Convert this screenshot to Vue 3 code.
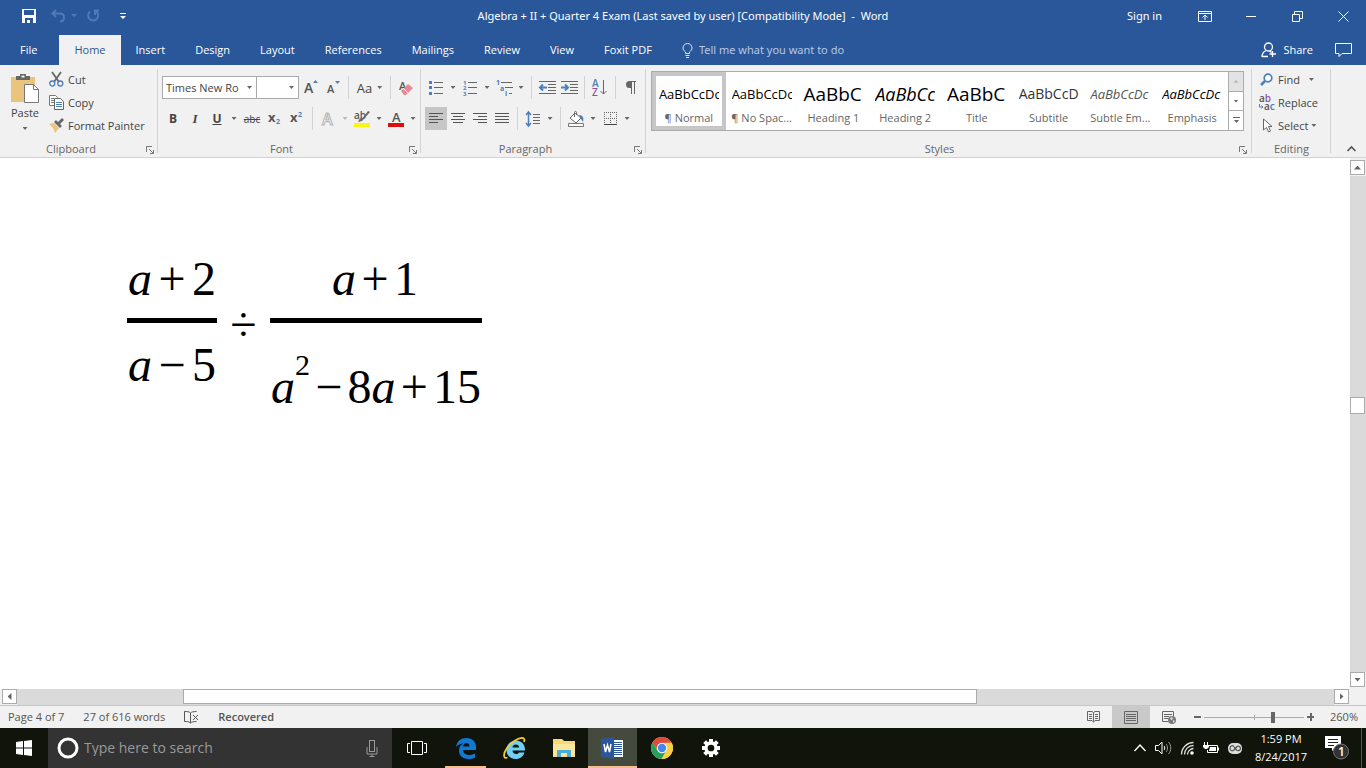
<script setup>
import { ref } from 'vue'

const tabs = ['File', 'Home', 'Insert', 'Design', 'Layout', 'References', 'Mailings', 'Review', 'View', 'Foxit PDF']
const activeTab = ref('Home')
const styles = [
  { name: '¶ Normal', sample: 'AaBbCcDc', kind: 'body' },
  { name: '¶ No Spac...', sample: 'AaBbCcDc', kind: 'body' },
  { name: 'Heading 1', sample: 'AaBbC', kind: 'big' },
  { name: 'Heading 2', sample: 'AaBbCc', kind: 'head2' },
  { name: 'Title', sample: 'AaBbC', kind: 'big' },
  { name: 'Subtitle', sample: 'AaBbCcD', kind: 'sub' },
  { name: 'Subtle Em...', sample: 'AaBbCcDc', kind: 'subtle' },
  { name: 'Emphasis', sample: 'AaBbCcDc', kind: 'emph' }
]
const fontName = ref('Times New Ro')
const fontSize = ref('')
const zoom = ref(260)
const search = ref('')
const tellMe = ref('')
</script>

<template>
  <div class="app">
    <header class="titlebar">
      <div class="quick">
        <button class="qbtn save" aria-label="Save"><svg width="14" height="14" viewBox="0 0 14 14"><path fill="#fff" fill-rule="evenodd" d="M0 0h14v14H0zM2 1v5h10V1zM3 9v5h2v-3h3v3h3V9z"/></svg></button>
        <button class="qbtn undo" aria-label="Undo"><svg width="28" height="14" viewBox="0 0 28 14"><path d="M5 1 1.500 4.500 5 8M2 4.500h7c3 0 4 2 4 4 0 3-2 4-4 4" fill="none" stroke="#5079b8" stroke-width="2"/><path d="M20 5h6l-3 3z" fill="#5079b8"/></svg></button>
        <button class="qbtn redo" aria-label="Repeat"><svg width="14" height="14" viewBox="0 0 14 14"><path d="M4 2.500a5 5 0 1 0 5.500-.5M9 6V1.500h4" fill="none" stroke="#5079b8" stroke-width="2"/></svg></button>
        <button class="qbtn more" aria-label="Customize toolbar"><svg width="6" height="7" viewBox="0 0 6 7"><path d="M0 0h6v1H0zM0 3h6L3 6z" fill="#fff"/></svg></button>
      </div>
      <h1 class="title">Algebra + II + Quarter 4 Exam (Last saved by user) [Compatibility Mode]&nbsp; -&nbsp; Word</h1>
      <div class="window">
        <button class="signin">Sign in</button>
        <button class="wbtn" aria-label="Ribbon options"><svg width="14" height="11" viewBox="0 0 14 11"><path d="M.5.5h13v10H.5zM.5 2.500h13M7 9V4M4.500 6.500 7 4l2.500 2.500" fill="none" stroke="#fff"/></svg></button>
        <button class="wbtn" aria-label="Minimize"><svg width="10" height="10" viewBox="0 0 10 10"><path d="M0 5.500h10" stroke="#fff"/></svg></button>
        <button class="wbtn" aria-label="Restore"><svg width="11" height="11" viewBox="0 0 11 11"><path d="M.5 3.500h7v7h-7zM2.500 3V.5h8v7H8" fill="none" stroke="#fff"/></svg></button>
        <button class="wbtn" aria-label="Close"><svg width="11" height="11" viewBox="0 0 11 11"><path d="m.5.5 10 10m0-10-10 10" stroke="#fff"/></svg></button>
      </div>
    </header>

    <nav class="tabs">
      <button v-for="t in tabs" :key="t" class="tab" :class="{ active: t === activeTab }" @click="activeTab = t">{{ t }}</button>
      <label class="tell">
        <svg width="11" height="15" viewBox="0 0 11 15"><path d="M3.500 10.500V9C2 8 1 6.500 1 5a4.500 4.500 0 0 1 9 0c0 1.500-1 3-2.500 4v1.500zM3.500 12.500h4M4 14.500h3" fill="none" stroke="#dbe5f3"/></svg>
        <input v-model="tellMe" type="text" placeholder="Tell me what you want to do" aria-label="Tell me what you want to do" />
      </label>
      <button class="share"><svg width="16" height="16" viewBox="0 0 16 16"><circle cx="7.500" cy="5" r="4" fill="none" stroke="#fff" stroke-width="1.300"/><path d="M5.500 8.500C2.500 9.500 1 12 1 15M1 14.500h6M8.500 9l2 1.500M11.500 9v6M8.500 12H15" fill="none" stroke="#fff" stroke-width="1.300"/></svg>Share</button>
      <button class="comment" aria-label="Comments"><svg width="17" height="15" viewBox="0 0 17 15"><path d="M.5.500h16v10H7l-3 3v-3H.500z" fill="none" stroke="#fff"/></svg></button>
    </nav>

    <section class="ribbon">
      <div class="group clipboard">
        <div class="clipbody">
          <button class="paste">
            <svg width="29" height="31" viewBox="0 0 29 31"><path d="M0 4h24v25H0z" fill="#eac47c"/><path d="M5 3h4V1h6v2h4v4H5z" fill="#666"/><path d="M10.500 2.500h3v2h-3z" fill="#f1f1f1"/><path d="M13.500 11.500h9l5 5v13h-14z" fill="#fff" stroke="#777"/><path d="M22.500 11.500v5h5" fill="none" stroke="#777"/></svg>
            <span>Paste</span><i class="arrow"></i>
          </button>
          <div class="stack">
            <button class="cmd"><svg width="15" height="15" viewBox="0 0 15 15"><path d="m3 0 7 10M12 0 5 10" stroke="#666" stroke-width="1.800"/><g fill="none" stroke="#4d80b8" stroke-width="1.300"><circle cx="3.300" cy="11.500" r="2.500"/><circle cx="11.300" cy="11.500" r="2.500"/></g></svg>Cut</button>
            <button class="cmd"><svg width="15" height="15" viewBox="0 0 15 15"><path d="M.5.500h6l2 2v8h-8zM2 3.500h3m-3 2h3m-3 2h3" fill="#fff" stroke="#777"/><path d="M5.500 3.500h6l3 3v8h-9z" fill="#fff" stroke="#666"/><path d="M7 7.500h6m-6 2h6m-6 2h6" stroke="#4d80b8"/></svg>Copy</button>
            <button class="cmd"><svg width="15" height="15" viewBox="0 0 15 15"><path d="m0 6 5-1 5 5-4 5c-1-4-3-7-6-9z" fill="#eac47c"/><path d="m5 4 2-2 6 6-2 2zM9 4l4-4 2 2-4 4z" fill="#666"/></svg>Format Painter</button>
          </div>
        </div>
        <div class="label">Clipboard<button class="launch" aria-label="Clipboard settings"><svg width="8" height="8" viewBox="0 0 8 8"><path d="M.5 6V.500H6M3 3l4 4M7.500 4v3.500H4" fill="none" stroke="#777"/></svg></button></div>
      </div>

      <div class="group font">
        <div class="row">
          <label class="combo name"><input v-model="fontName" aria-label="Font" /><i class="arrow"></i></label>
          <label class="combo size"><input v-model="fontSize" aria-label="Font size" /><i class="arrow"></i></label>
          <button class="ic" aria-label="Grow font"><svg width="14" height="15" viewBox="0 0 14 15"><text x="0" y="13" font-size="14" font-weight="600" fill="#555">A</text><path d="M9 3h5l-2.500-3z" fill="#4d80b8"/></svg></button>
          <button class="ic" aria-label="Shrink font"><svg width="14" height="15" viewBox="0 0 14 15"><text x="1" y="13" font-size="11" font-weight="600" fill="#555">A</text><path d="M9 1h5l-2.500 3z" fill="#4d80b8"/></svg></button>
          <i class="sep"></i>
          <button class="ic aa">Aa<i class="arrow"></i></button>
          <i class="sep"></i>
          <button class="ic" aria-label="Clear formatting"><svg width="16" height="16" viewBox="0 0 16 16"><text x="1" y="10" font-size="11" font-weight="600" fill="#555">A</text><path d="m3 11 7-7 5 4-7 7H6z" fill="#e58a95"/><path d="m5 8 5 5" stroke="#fff"/></svg></button>
        </div>
        <div class="row">
          <button class="ic"><b>B</b></button>
          <button class="ic ital">I</button>
          <button class="ic"><b><u>U</u></b></button><button class="drop" aria-label="Underline style"><i class="arrow"></i></button>
          <button class="ic strike">abc</button>
          <button class="ic" aria-label="Subscript"><svg width="14" height="15" viewBox="0 0 14 15"><text x="0" y="11" font-size="13" font-weight="700" fill="#555">x</text><text x="8" y="13" font-size="7" font-weight="700" fill="#4d80b8">2</text></svg></button>
          <button class="ic" aria-label="Superscript"><svg width="14" height="15" viewBox="0 0 14 15"><text x="0" y="11" font-size="13" font-weight="700" fill="#555">x</text><text x="8" y="6" font-size="7" font-weight="700" fill="#4d80b8">2</text></svg></button>
          <i class="sep"></i>
          <button class="ic" aria-label="Text effects"><svg width="16" height="16" viewBox="0 0 16 16"><text x="2" y="14" font-size="16" font-weight="600" fill="#fff" stroke="#b4b4b4">A</text></svg></button><button class="drop pale" aria-label="Effects list"><i class="arrow"></i></button>
          <button class="ic" aria-label="Highlight"><svg width="16" height="16" viewBox="0 0 16 16"><text x="0" y="8" font-size="10" font-weight="600" fill="#555">ab</text><path d="m16 1-8 9-4 1 2-4 2 1 6-8z" fill="#666"/><path d="M0 12h16v4H0z" fill="#fbf312"/></svg></button><button class="drop" aria-label="Highlight colors"><i class="arrow"></i></button>
          <button class="ic" aria-label="Font color"><svg width="16" height="16" viewBox="0 0 16 16"><text x="4" y="11" font-size="13" font-weight="600" fill="#555">A</text><path d="M0 12h16v4H0z" fill="#e00b0b"/></svg></button><button class="drop" aria-label="Font colors"><i class="arrow"></i></button>
        </div>
        <div class="label">Font<button class="launch" aria-label="Font settings"><svg width="8" height="8" viewBox="0 0 8 8"><path d="M.5 6V.500H6M3 3l4 4M7.500 4v3.500H4" fill="none" stroke="#777"/></svg></button></div>
      </div>

      <div class="group para">
        <div class="row">
          <button class="ic" aria-label="Bullets"><svg width="14" height="15" viewBox="0 0 14 15"><path d="M0 1h3v3H0zM0 6h3v3H0zM0 12h3v3H0z" fill="#4d80b8"/><path d="M5 2.500h9M5 7.500h9M5 13.500h9" stroke="#666"/></svg></button><button class="drop" aria-label="Bullet list"><i class="arrow"></i></button>
          <button class="ic" aria-label="Numbering"><svg width="14" height="16" viewBox="0 0 14 16"><g font-size="6" font-weight="700" fill="#4d80b8"><text x="0" y="5">1</text><text x="0" y="10">2</text><text x="0" y="16">3</text></g><path d="M5 2.500h9M5 7.500h9M5 13.500h9" stroke="#666"/></svg></button><button class="drop" aria-label="Number list"><i class="arrow"></i></button>
          <button class="ic" aria-label="Multilevel list"><svg width="17" height="16" viewBox="0 0 17 16"><g font-size="7" font-weight="700" fill="#4d80b8"><text x="0" y="5">1</text><text x="4" y="11">a</text><text x="9" y="16">i</text></g><path d="M5 2.500h11M9 7.500h8M13 13.500h3" stroke="#666"/></svg></button><button class="drop" aria-label="Level list"><i class="arrow"></i></button>
          <i class="sep"></i>
          <button class="ic" aria-label="Decrease indent"><svg width="17" height="13" viewBox="0 0 17 13"><path d="M0 .5h17M9 3.500h8M9 6.500h8M9 9.500h8M0 12.500h17" stroke="#666"/><path d="M1 6.500h7M4 3.500l-3 3 3 3" fill="none" stroke="#4d80b8" stroke-width="2"/></svg></button>
          <button class="ic" aria-label="Increase indent"><svg width="17" height="13" viewBox="0 0 17 13"><path d="M0 .5h17M9 3.500h8M9 6.500h8M9 9.500h8M0 12.500h17" stroke="#666"/><path d="M0 6.500h7M4 3.500l3 3-3 3" fill="none" stroke="#4d80b8" stroke-width="2"/></svg></button>
          <i class="sep"></i>
          <button class="ic" aria-label="Sort"><svg width="16" height="17" viewBox="0 0 16 17"><text x="0" y="8" font-size="10" font-weight="600" fill="#4d80b8">A</text><text x="0" y="17" font-size="10" font-weight="600" fill="#9150a8">Z</text><path d="M11.500 1v14M8.500 12l3 3 3-3" fill="none" stroke="#666"/></svg></button>
          <i class="sep"></i>
          <button class="ic" aria-label="Show marks"><svg width="10" height="13" viewBox="0 0 10 13"><path d="M5 7H3.500a3.500 3.500 0 0 1 0-7H10v1H9v12H8V1H6v12H5z" fill="#666"/></svg></button>
        </div>
        <div class="row">
          <button class="ic on" aria-label="Align left"><svg width="14" height="11" viewBox="0 0 14 11"><path d="M0 .5h14M0 3.500h9M0 6.500h14M0 9.500h9" stroke="#555"/></svg></button>
          <button class="ic" aria-label="Center"><svg width="14" height="11" viewBox="0 0 14 11"><path d="M0 .5h14M2 3.500h10M0 6.500h14M2 9.500h10" stroke="#555"/></svg></button>
          <button class="ic" aria-label="Align right"><svg width="14" height="11" viewBox="0 0 14 11"><path d="M0 .5h14M5 3.500h9M0 6.500h14M5 9.500h9" stroke="#555"/></svg></button>
          <button class="ic" aria-label="Justify"><svg width="14" height="11" viewBox="0 0 14 11"><path d="M0 .5h14M0 3.500h14M0 6.500h14M0 9.500h14" stroke="#555"/></svg></button>
          <i class="sep"></i>
          <button class="ic" aria-label="Line spacing"><svg width="14" height="16" viewBox="0 0 14 16"><path d="M2.500 1v14M0 4l2.500-3L5 4M0 12l2.500 3L5 12" fill="none" stroke="#4d80b8" stroke-width="1.500"/><path d="M7 3.500h7M7 6.500h7M7 9.500h7M7 12.500h7" stroke="#666"/></svg></button><button class="drop" aria-label="Spacing list"><i class="arrow"></i></button>
          <i class="sep"></i>
          <button class="ic" aria-label="Shading"><svg width="17" height="16" viewBox="0 0 17 16"><path d="m2 7 5-5 6 5-5 5zM6.500 6V1.500c0-1.500 2-1.500 2 0V4" fill="#fff" stroke="#666"/><path d="M11 4c4 0 5 3 4 7l-2-3z" fill="#4d80b8"/><path d="M.5 12.500h15v3H.500z" fill="#fff" stroke="#777"/></svg></button><button class="drop" aria-label="Shading colors"><i class="arrow"></i></button>
          <button class="ic" aria-label="Borders"><svg width="13" height="13" viewBox="0 0 13 13"><path d="M.5 0v12M6.500 0v12M12.500 0v12M0 .500h13M0 6.500h13" stroke="#666" stroke-dasharray="1 1"/><path d="M0 12.500h13" stroke="#444"/></svg></button><button class="drop" aria-label="Border list"><i class="arrow"></i></button>
        </div>
        <div class="label">Paragraph<button class="launch" aria-label="Paragraph settings"><svg width="8" height="8" viewBox="0 0 8 8"><path d="M.5 6V.500H6M3 3l4 4M7.500 4v3.500H4" fill="none" stroke="#777"/></svg></button></div>
      </div>

      <div class="group stylegroup">
        <div class="gallery">
          <button v-for="(s, i) in styles" :key="s.name" class="style" :class="{ chosen: i === 0 }">
            <span class="sample" :class="s.kind">{{ s.sample }}</span><span class="sname">{{ s.name }}</span>
          </button>
          <div class="gscroll">
            <button class="off" aria-label="Previous styles"><i class="arrow up"></i></button>
            <button aria-label="Next styles"><i class="arrow"></i></button>
            <button aria-label="All styles"><svg width="7" height="7" viewBox="0 0 7 7"><path d="M0 0h7v1H0zM1 3h5L3.500 6z" fill="#666"/></svg></button>
          </div>
        </div>
        <div class="label">Styles<button class="launch" aria-label="Styles pane"><svg width="8" height="8" viewBox="0 0 8 8"><path d="M.5 6V.500H6M3 3l4 4M7.500 4v3.500H4" fill="none" stroke="#777"/></svg></button></div>
      </div>

      <div class="group editing">
        <div class="stack">
          <button class="cmd"><svg width="16" height="14" viewBox="0 0 16 14"><circle cx="9" cy="5" r="3.800" fill="#fff" stroke="#4d80b8" stroke-width="1.700"/><path d="m6 8-4 4" stroke="#4d80b8" stroke-width="2.500"/></svg>Find<i class="arrow far"></i></button>
          <button class="cmd"><svg width="16" height="16" viewBox="0 0 16 16"><g font-size="10" font-weight="600"><text x="0" y="7"><tspan fill="#555">a</tspan><tspan fill="#9150a8">b</tspan></text><text x="5" y="15"><tspan fill="#555">a</tspan><tspan fill="#4d80b8">c</tspan></text></g><path d="M.5 9v3H4M2.500 10.500 4 12l-1.500 1.500" fill="none" stroke="#4d80b8"/></svg>Replace</button>
          <button class="cmd"><svg width="16" height="15" viewBox="0 0 16 15"><path d="M4.500 1v11l3-2.500 2 4.500 2-1-2-4.500h3.500z" fill="#fff" stroke="#666"/></svg>Select<i class="arrow"></i></button>
        </div>
        <div class="label">Editing</div>
      </div>
      <button class="collapse" aria-label="Collapse ribbon"><svg width="9" height="6" viewBox="0 0 9 6"><path d="m.5 5 4-4 4 4" fill="none" stroke="#555" stroke-width="1.700"/></svg></button>
    </section>

    <main class="doc">
      <article class="page">
        <div class="equation">
          <div class="frac">
            <div class="num"><em>a</em><span>+</span><span>2</span></div>
            <div class="den"><em>a</em><span>−</span><span>5</span></div>
          </div>
          <span class="divide">÷</span>
          <div class="frac wide">
            <div class="num"><em>a</em><span>+</span><span>1</span></div>
            <div class="den low"><span><em>a</em><sup>2</sup></span><span>−</span><span>8<em>a</em></span><span>+</span><span>15</span></div>
          </div>
        </div>
      </article>
      <div class="vscroll">
        <button class="sbtn" aria-label="Scroll up"><i class="tri up"></i></button>
        <div class="vtrack"><i class="vthumb"></i></div>
        <button class="sbtn" aria-label="Scroll down"><i class="tri"></i></button>
      </div>
    </main>
    <div class="hscroll">
      <button class="sbtn" aria-label="Scroll left"><i class="tri left"></i></button>
      <div class="htrack"><i class="hthumb"></i></div>
      <button class="sbtn" aria-label="Scroll right"><i class="tri right"></i></button>
    </div>

    <footer class="status">
      <span>Page 4 of 7</span><span>27 of 616 words</span>
      <svg width="15" height="13" viewBox="0 0 15 13"><path d="M6.500 12V2C5 .5 3 .5.500.500v10c2.500 0 4.500 0 6 1.500 1-1 3-1.500 6-1.500M6.500 2c1-1 3-1.500 6-1.500M9 4l5 5m0-5L9 9" fill="none" stroke="#555"/></svg>
      <span class="strong">Recovered</span>
      <div class="views">
        <button aria-label="Read mode"><svg width="13" height="12" viewBox="0 0 13 12"><path d="M6.500 11.500V1.500L5 .5H.500v9H5l1.500 1.500L8 9.500h4.500v-9H8L6.500 1.500M2 3.500h3m-3 2h3m-3 2h3m3-4h3m-3 2h3m-3 2h3" fill="none" stroke="#666"/></svg></button>
        <button class="on" aria-label="Print layout"><svg width="14" height="13" viewBox="0 0 14 13"><path d="M.5.500h13v12H.500zM2 3.500h10m-10 2h10m-10 2h10m-10 2h10" fill="none" stroke="#666"/></svg></button>
        <button aria-label="Web layout"><svg width="14" height="13" viewBox="0 0 14 13"><path d="M6 10.500H.500V.500h11V5M2 3.500h8m-8 2h5m-5 2h4" fill="none" stroke="#666"/><circle cx="10" cy="9" r="4" fill="#777"/><path d="m8 7 2-1 1 2-2 1zM11 9l2 1-2 2z" fill="#ddd"/></svg></button>
      </div>
      <div class="zoom">
        <button aria-label="Zoom out"><i class="minus"></i></button>
        <input v-model="zoom" type="range" min="10" max="370" aria-label="Zoom" />
        <button aria-label="Zoom in"><i class="minus plus"></i></button>
        <span class="pct">{{ zoom }}%</span>
      </div>
    </footer>

    <div class="taskbar">
      <button class="start" aria-label="Start"><svg width="16" height="16" viewBox="0 0 16 16"><path d="m0 2 7-1v6.500H0zM8 .9 16 0v7.500H8zM0 8.500h7V15l-7-1zM8 8.500h8V16l-8-1.100z" fill="#fff"/></svg></button>
      <label class="search">
        <svg width="22" height="22" viewBox="0 0 22 22"><circle cx="11" cy="11" r="9" fill="none" stroke="#fff" stroke-width="3"/></svg>
        <input v-model="search" type="text" placeholder="Type here to search" aria-label="Type here to search" />
        <svg width="12" height="17" viewBox="0 0 12 17"><rect x="3.500" y=".5" width="5" height="11" fill="none" stroke="#999"/><path d="M1 7v7h10V7M6 14v3M3.500 16.500h5" fill="none" stroke="#999"/></svg>
      </label>
      <button class="task" aria-label="Task view"><svg width="20" height="14" viewBox="0 0 20 14"><path d="M4.500.500h11v13h-11zM3 2.500H.500v9H3M17 2.500h2.500v9H17" fill="none" stroke="#fff"/></svg></button>
      <button class="task open" aria-label="Edge"><svg width="20" height="21" viewBox="0 0 20 21"><path d="M0 9C1 3 5 0 10.500 0 17 0 20 4.500 20 9v3H7c0 3 3 5 6.500 5 2 0 4-.6 5.500-1.500v4C17 20.500 15 21 12.500 21 7 21 3 18 3 12.500 3 9 5 6.500 7.500 5.300 4 5.500 2 7 0 9zm7-.5h6.500C13.500 6.500 12.500 5 10.500 5 8.500 5 7.300 6.500 7 8.500z" fill="#1079d4"/></svg></button>
      <button class="task" aria-label="Internet Explorer"><svg width="23" height="23" viewBox="0 0 23 23"><path d="M22 13.500H9.500c.2 2.300 1.500 3.500 3.500 3.500 1.300 0 2.300-.5 2.900-1.500h5.600C20.300 19.500 17 22 12.800 22 7.300 22 3.500 18.300 3.500 13S7.300 3.500 12.800 3.500c5.700 0 9.500 4 9.200 10zM9.500 10.500h6.700c-.2-2-1.500-3-3.300-3-1.900 0-3.200 1-3.400 3z" fill="#6fd0f6"/><path d="M4.500 20.500C0 22.500 0 16.500 4 11 8 5.500 15.500.5 19.500 1c2 .3 2.300 2 1.500 4" fill="none" stroke="#f0c93a" stroke-width="1.800"/></svg></button>
      <button class="task" aria-label="File Explorer"><svg width="22" height="19" viewBox="0 0 22 19"><path d="M0 0h9l2 2h11v16H0z" fill="#f6d97b"/><path d="M1 2h8M0 5h22v12H0z" fill="#fbe69a"/><path d="M4 18v-7h14v7h-4v-4H8v4z" fill="#45afd8"/></svg></button>
      <button class="task open current" aria-label="Word"><svg width="23" height="22" viewBox="0 0 23 22"><path d="M12 3h10v17H12z" fill="#fff"/><path d="M13 5.500h8m-8 2h8m-8 2h8m-8 2h8m-8 2h8m-8 2h8m-8 2h8" stroke="#2b579a"/><path d="m0 2 13-2v22L0 20z" fill="#2b579a"/><path d="m3 7 1.500 8L6.500 8l2 7L10 7" fill="none" stroke="#fff" stroke-width="1.500"/></svg></button>
      <button class="task" aria-label="Chrome"><svg width="22" height="22" viewBox="0 0 22 22"><circle cx="11" cy="11" r="11" fill="#f9d043"/><path d="M1.500 5.500A11 11 0 0 1 20.500 5.500L11 6l-4.500 7z" fill="#df4b3e"/><path d="M1.500 5.500a11 11 0 0 0 9 16.500l5-8.500-9 0z" fill="#24a05b"/><path d="M11 6h9.800A11 11 0 0 1 10.500 22l5-8.500z" fill="#f9d043"/><circle cx="11" cy="11" r="5.200" fill="#fff"/><circle cx="11" cy="11" r="4.200" fill="#4587ef"/></svg></button>
      <button class="task" aria-label="Settings"><svg width="18" height="18" viewBox="-9 -9 18 18"><g fill="#fff"><rect v-for="n in 8" :key="n" x="-2" y="-9" width="4" height="5" :transform="`rotate(${n * 45})`"/></g><circle r="5" fill="none" stroke="#fff" stroke-width="3.300"/></svg></button>
      <div class="tray">
        <svg width="12" height="8" viewBox="0 0 12 8"><path d="m.500 7 5.500-6 5.500 6" fill="none" stroke="#fff" stroke-width="1.300"/></svg>
        <svg width="17" height="14" viewBox="0 0 17 14"><path d="M.5 4.500h3L7 1v12L3.500 9.500h-3z" fill="none" stroke="#fff"/><path d="M9 5c1 1 1 3 0 4" fill="none" stroke="#fff"/><path d="M11 3c2 2 2 6 0 8M13.500 1c3 3 3 9 0 12" fill="none" stroke="#999"/></svg>
        <svg width="13" height="13" viewBox="0 0 13 13"><path d="M.5 12.500C.500 6 6 .500 12.500.500M3.500 12.500c0-5 4-9 9-9M6.500 12.500c0-3 3-6 6-6" fill="none" stroke="#ddd" stroke-width="1.300"/><circle cx="11" cy="11" r="1.800" fill="#fff"/></svg>
        <svg width="16" height="12" viewBox="0 0 16 12"><path d="M6 3.500h8.500v7h-10V8M15.500 5.500v3" fill="none" stroke="#fff"/><path d="M7 5h6v4H6zM0 3h6v2L4 7H2L0 5zM1 0h1v3H1zM4 0h1v3H4z" fill="#fff"/></svg>
        <svg width="14" height="11" viewBox="0 0 14 11"><rect width="14" height="11" rx="5" fill="#ddd"/><path d="M6 3.500c-2-2-4 0-4 2s2 3 4 1.500l2.500-3c2-2 4 0 4 1.500s-2 3-4 1.500L6 4" fill="none" stroke="#555" stroke-width="1.200"/></svg>
        <div class="clock"><span>1:59 PM</span><span>8/24/2017</span></div>
        <button class="notice" aria-label="Notifications"><svg width="24" height="24" viewBox="0 0 24 24"><path d="M0 0h16v12h-6l-3 3v-3H0z" fill="#fff"/><path d="M3 3.500h10m-10 3h10m-10 3h6" stroke="#222"/><circle cx="16" cy="15.500" r="7.500" fill="#333" stroke="#777"/><text x="13" y="20" font-size="12" font-weight="600" fill="#fff">1</text></svg></button>
        <i class="desk"></i>
      </div>
    </div>
  </div>
</template>

<style>
body { margin: 0; }
</style>

<style scoped>
* { box-sizing: border-box; }
.app { display: flex; flex-direction: column; min-height: 100vh; font: 11px/16px "Open Sans", "Noto Sans", sans-serif; color: #444; background: #fff; overflow: hidden; }
button { font: inherit; color: inherit; background: none; border: 0; padding: 0; margin: 0; display: flex; align-items: center; justify-content: center; flex-shrink: 0; white-space: nowrap; }
input { font: inherit; color: inherit; background: none; border: 0; padding: 0; margin: 0; min-width: 0; outline: 0; }
svg { display: block; flex-shrink: 0; overflow: visible; }
.titlebar { height: 32px; background: #2a579a; color: #fff; display: grid; grid-template-columns: 1fr auto 1fr; align-items: center; font-family: "Noto Sans", sans-serif; }
.title { font-size: 11px; font-weight: 400; margin: 0; }
.quick { display: flex; align-items: center; padding-left: 22px; }
.qbtn.undo { margin-left: 15px; }
.qbtn.redo { margin-left: 7px; }
.qbtn.more { margin-left: 20px; }
.window { display: flex; justify-content: flex-end; }
.signin { margin-right: 20px; }
.wbtn { width: 46px; height: 30px; }
.tabs { background: #2a579a; color: #fff; display: flex; padding: 3px 0 0; height: 33px; }
.tab { height: 30px; padding: 0 15px; }
.tab:first-child { padding: 0 22px 0 20px; }
.tab.active { background: #f1f1f1; color: #2a579a; }
.tell { display: flex; align-items: center; gap: 6px; margin-left: 15px; flex: 1; font-family: "Noto Sans", sans-serif; }
.tell input { flex: 1; }
.tell input::placeholder { color: #b5c7e3; opacity: 1; }
.share { gap: 6px; margin-right: 22px; }
.comment { margin-right: 14px; }

.ribbon { display: flex; height: 93px; background: #f1f1f1; border-bottom: 1px solid #d2d2d2; }
.group { position: relative; display: flex; flex-direction: column; gap: 8px; padding: 11px 4px 0; flex-shrink: 0; }
.group::after { content: ""; position: absolute; right: 0; top: 4px; bottom: 4px; width: 1px; background: #d2d2d2; }
.label { margin-top: auto; height: 16px; display: flex; justify-content: center; color: #666; padding-right: 16px; position: relative; }
.launch { position: absolute; right: 0; top: 5px; }
.clipboard { width: 158px; padding-top: 3px; gap: 0; }
.clipbody { display: flex; }
.paste { flex-direction: column; width: 42px; justify-content: flex-start; padding-top: 5px; }
.paste span { margin: 1px 0 6px; }
.stack { display: flex; flex-direction: column; }
.cmd { height: 23px; justify-content: flex-start; gap: 4px; padding-left: 3px; }
.arrow { display: block; width: 5px; height: 3px; background: #666; clip-path: polygon(0 0, 100% 0, 50% 100%); }
.arrow.up { background: #bbb; clip-path: polygon(0 100%, 100% 100%, 50% 0); }
.arrow.far { margin-left: 6px; }
.font { width: 263px; }
.para { width: 225px; }
.row { display: flex; height: 23px; }
.ic { width: 22px; font-size: 12px; }
.ic.on { background: #c6c6c6; }
.aa { width: 33px; gap: 5px; font-size: 13px; }
.ital { font-family: "Liberation Serif", serif; font-style: italic; font-weight: 700; font-size: 13px; }
.strike { text-decoration: line-through; font-size: 10px; width: 24px; }
.drop { width: 12px; }
.drop.pale { opacity: .4; }
.sep { width: 1px; margin: 0 4px; background: #d2d2d2; flex-shrink: 0; }
.combo { display: flex; align-items: center; background: #fff; border: 1px solid #ababab; padding: 0 4px 0 3px; }
.combo.name { width: 95px; margin-right: -1px; }
.combo.size { width: 43px; margin-right: 1px; }
.combo input { flex: 1; width: 20px; }

.stylegroup { flex: 1; min-width: 0; padding: 6px 8px 0 5px; }
.gallery { display: flex; height: 60px; background: #fff; border: 1px solid #ababab; min-width: 0; }
.style { flex: 1; min-width: 0; flex-direction: column; overflow: hidden; padding: 10px 3px 0; justify-content: flex-start; }
.style.chosen { border: 4px solid #c6c6c6; padding: 6px 0 0; }
.sample { width: 60px; height: 24px; line-height: 24px; overflow: hidden; text-align: left; color: #000; font-size: 13px; flex-shrink: 0; margin-bottom: 4px; }
.sname { color: #666; line-height: 16px; }
.big { font-size: 19px; }
.head2 { font-size: 18px; font-style: italic; }
.sub { font-size: 14px; color: #333; }
.subtle { font-style: italic; color: #555; }
.emph { font-style: italic; }
.gscroll { width: 15px; border-left: 1px solid #ababab; display: flex; flex-direction: column; flex-shrink: 0; }
.gscroll button { flex: 1; border-bottom: 1px solid #ababab; }
.gscroll button:last-child { border-bottom: 0; }
.gscroll .off { background: #e3e3e3; }
.stylegroup .launch { right: -3px; }
.editing { width: 79px; padding-top: 3px; gap: 0; }
.editing .cmd { gap: 3px; }
.editing .label { padding: 0; }
.collapse { flex: 0 0 35px; align-items: flex-end; padding: 0 0 5px 6px; }

.doc { flex: 1; display: flex; min-height: 0; }
.page { flex: 1; min-width: 0; padding: 82px 0 0 127px; }
.equation { display: flex; font: 48px/60px "Liberation Serif", "Times New Roman", serif; color: #000; }
.frac { width: 90px; }
.frac.wide { width: 212px; }
.num, .den { display: flex; justify-content: space-between; padding: 0 1px; height: 84px; align-items: center; }
.num { border-bottom: 5px solid #000; height: 83px; }
.den.low { height: 128px; }
.wide .num { padding: 0 64px 0 62px; }
.divide { width: 53px; text-align: center; padding-top: 55px; }
sup { font-size: 30px; line-height: 0; vertical-align: 28px; }
.vscroll { width: 16px; background: #f1f1f1; display: flex; flex-direction: column; padding: 2px 0; }
.sbtn { width: 15px; height: 15px; background: #fff; border: 1px solid #ababab; }
.vtrack { flex: 1; background: #dadada; padding-top: 221px; margin-top: 1px; }
.vthumb { display: block; width: 15px; height: 17px; background: #fff; border: 1px solid #ababab; }
.tri { width: 7px; height: 4px; background: #666; clip-path: polygon(0 0, 100% 0, 50% 100%); }
.tri.up { clip-path: polygon(0 100%, 100% 100%, 50% 0); }
.tri.left { width: 4px; height: 7px; clip-path: polygon(100% 0, 100% 100%, 0 50%); }
.tri.right { width: 4px; height: 7px; clip-path: polygon(0 0, 0 100%, 100% 50%); }
.hscroll { display: flex; height: 16px; padding: 0 17px 0 2px; background: #f1f1f1; }
.htrack { flex: 1; background: #dadada; }
.hthumb { display: block; margin-left: 12.600%; width: 60.300%; height: 15px; background: #fff; border: 1px solid #ababab; }
.status { display: flex; align-items: center; height: 23px; background: #f1f1f1; border-top: 1px solid #c6c6c6; padding: 0 8px; gap: 19px; color: #555; }
.strong { font-weight: 600; }
.views { display: flex; margin-left: auto; align-self: stretch; }
.views button { width: 38px; }
.views .on { background: #c9c9c9; }
.zoom { display: flex; align-items: center; margin-left: -13px; gap: 3px; }
.zoom input { width: 100px; height: 14px; appearance: none; background: linear-gradient(#aaa, #aaa) center / 100% 1px no-repeat, linear-gradient(#aaa, #aaa) center / 1px 5px no-repeat; }
.zoom input::-webkit-slider-thumb { appearance: none; width: 4px; height: 11px; background: #666; }
.minus { width: 7px; height: 2px; background: #666; }
.plus { height: 8px; background: linear-gradient(#666, #666) center / 100% 2px no-repeat, linear-gradient(#666, #666) center / 2px 100% no-repeat; }
.pct { margin-left: 13px; }

.taskbar { display: flex; height: 40px; background: #10140a; color: #fff; }
.start { width: 48px; }
.search { width: 344px; background: #333; display: flex; align-items: center; gap: 5px; padding: 0 14px 0 9px; color: #aaa; font-size: 14px; }
.search input { flex: 1; }
.search input::placeholder { color: #999; opacity: 1; }
.task { width: 49px; position: relative; }
.task.open::after { content: ""; position: absolute; left: 4px; right: 4px; bottom: 0; height: 2px; background: #f6bd8c; }
.task.current { background: #444a3e; }
.task.current::after { left: 0; right: 0; }
.tray { margin-left: auto; display: flex; align-items: center; gap: 9px; }
.clock { display: flex; flex-direction: column; align-items: center; line-height: 18px; width: 60px; }
.notice { margin-left: 5px; }
.desk { width: 5px; border-left: 1px solid #555; align-self: stretch; margin-left: 3px; }
</style>
